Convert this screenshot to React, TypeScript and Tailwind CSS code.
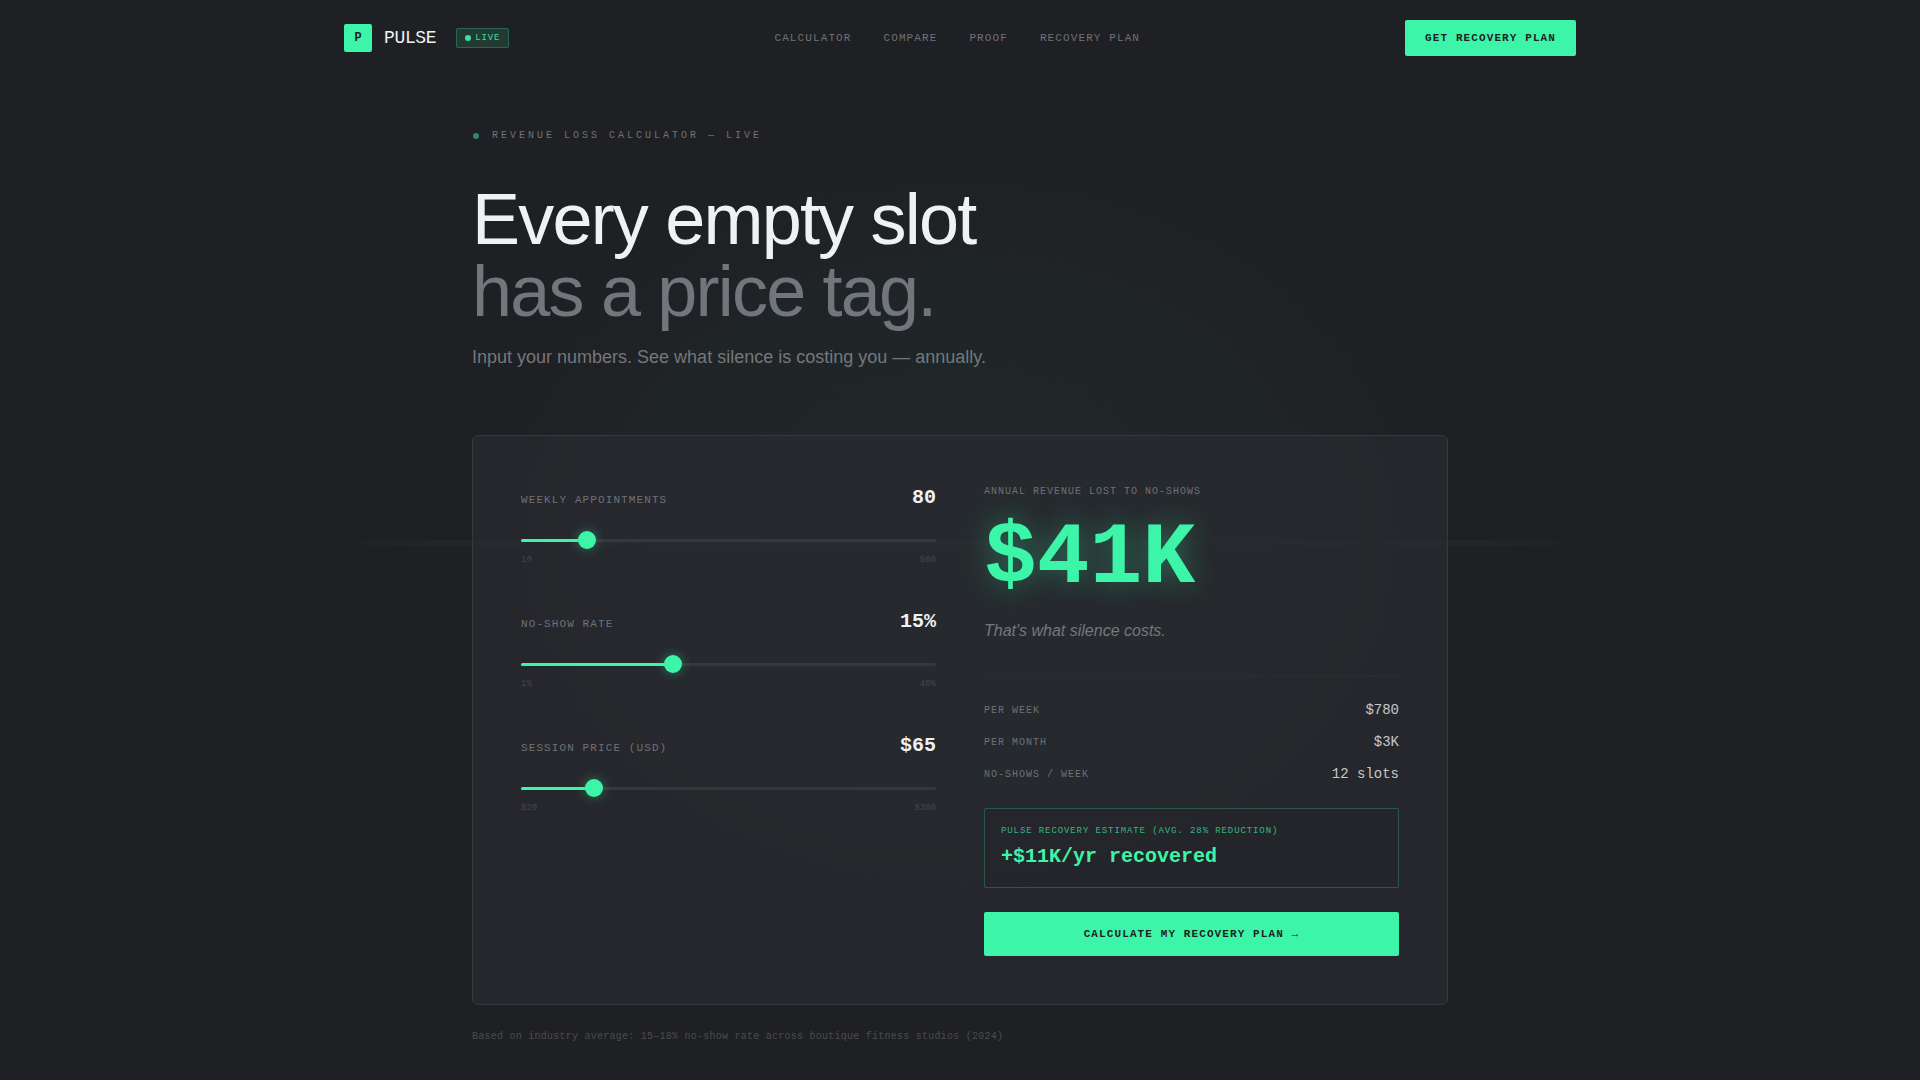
import { useState } from 'react';

const navItems = [
  { label: 'Calculator', id: 'calculator' },
  { label: 'Compare', id: 'compare' },
  { label: 'Proof', id: 'proof' },
  { label: 'Recovery Plan', id: 'recovery-plan' },
];

const RECOVERY_RATE = 0.28;

function formatMoney(value: number) {
  if (value >= 1000) {
    return `$${Math.round(value / 1000)}K`;
  }
  return `$${Math.round(value)}`;
}

function Background() {
  return (
    <div className="absolute inset-0 -z-10 overflow-hidden" aria-hidden="true">
      {/* Grid */}
      <div className="absolute inset-0 bg-[linear-gradient(rgba(255,255,255,0.004)_1px,transparent_1px),linear-gradient(90deg,rgba(255,255,255,0.004)_1px,transparent_1px)] bg-[size:48px_48px]" />
      {/* Glow */}
      <div className="absolute left-1/2 top-1/2 h-[760px] w-[960px] -translate-x-1/2 -translate-y-1/2 bg-[radial-gradient(ellipse_closest-side,rgba(50,220,180,0.05),rgba(50,220,180,0.025)_70%,transparent)]" />
      {/* Scan line */}
      <div className="absolute left-1/6 right-1/6 top-1/2 h-1.5 bg-[linear-gradient(90deg,transparent,rgba(255,255,255,0.025)_10%,rgba(255,255,255,0.025)_90%,transparent)]" />
    </div>
  );
}

function Navigation() {
  return (
    <header>
      <div className="max-w-7xl mx-auto px-6 py-5 flex justify-between items-center">
        <div className="flex items-center gap-3">
          <div className="w-7 h-7 rounded-xs bg-[#3df5a8] text-[#1e1f23] text-xs font-bold flex items-center justify-center">
            P
          </div>
          <span className="text-lg leading-6 tracking-[-0.02em] text-[#f0f1f4]">PULSE</span>
          <div className="ml-2 flex items-center gap-1 px-2 py-[2px] rounded-xs border border-[#3df5a8]/25 bg-[#3df5a8]/12">
            <span className="w-1.5 h-1.5 rounded-full bg-[#3df5a8]/90" />
            <span className="text-[9px] leading-[14px] tracking-widest text-[#3df5a8]/90">LIVE</span>
          </div>
        </div>

        <nav className="flex items-center gap-8">
          {navItems.map((item) => (
            <a
              key={item.id}
              href={`#${item.id}`}
              className="text-[11px] leading-4 tracking-widest uppercase text-[#6f7177] hover:text-white transition-colors"
            >
              {item.label}
            </a>
          ))}
        </nav>

        <button className="px-5 py-[10px] rounded-xs bg-[#3df5a8] text-[11px] leading-4 font-bold tracking-widest uppercase text-[#1e1f23]">
          Get Recovery Plan
        </button>
      </div>
    </header>
  );
}

type SliderProps = {
  id: string;
  label: string;
  value: number;
  min: number;
  max: number;
  format: (value: number) => string;
  onChange: (value: number) => void;
};

function Slider({ id, label, value, min, max, format, onChange }: SliderProps) {
  const percent = ((value - min) / (max - min)) * 100;

  return (
    <div>
      <div className="flex justify-between items-baseline mb-[18px]">
        <label htmlFor={id} className="text-[11px] tracking-widest uppercase text-[#6f7177]">
          {label}
        </label>
        <output htmlFor={id} className="text-xl leading-7 font-bold text-[#f0f1f4]">
          {format(value)}
        </output>
      </div>
      <div className="relative flex items-center h-5">
        <div className="absolute inset-x-0 h-[3px] rounded-full bg-[#35373c]">
          <div className="h-full rounded-full bg-[#3df5a8]" style={{ width: `${percent}%` }} />
        </div>
        <input
          id={id}
          type="range"
          min={min}
          max={max}
          value={value}
          onChange={(e) => onChange(Number(e.target.value))}
          className="relative w-full h-5 appearance-none bg-transparent cursor-pointer [&::-webkit-slider-thumb]:appearance-none [&::-webkit-slider-thumb]:w-[18px] [&::-webkit-slider-thumb]:h-[18px] [&::-webkit-slider-thumb]:rounded-full [&::-webkit-slider-thumb]:bg-[#3df5a8] [&::-webkit-slider-thumb]:shadow-[0_0_12px_rgba(61,245,168,0.4)]"
        />
      </div>
      <div className="flex justify-between mt-[2px] text-[9px] leading-4 text-[#44464b]">
        <span>{format(min)}</span>
        <span>{format(max)}</span>
      </div>
    </div>
  );
}

function Calculator() {
  const [appointments, setAppointments] = useState(80);
  const [noShowRate, setNoShowRate] = useState(15);
  const [price, setPrice] = useState(65);

  const noShows = Math.round((appointments * noShowRate) / 100);
  const weekly = noShows * price;
  const annual = weekly * 52;

  const rows = [
    { label: 'Per week', value: formatMoney(weekly) },
    { label: 'Per month', value: formatMoney(annual / 12) },
    { label: 'No-shows / week', value: `${noShows} slots` },
  ];

  return (
    <div className="grid grid-cols-2 gap-12 p-12 rounded-md border border-[#36383d] bg-[#2a2b31]/70">
      <div className="flex flex-col gap-10">
        <Slider
          id="appointments"
          label="Weekly appointments"
          value={appointments}
          min={10}
          max={500}
          format={(v) => `${v}`}
          onChange={setAppointments}
        />
        <Slider
          id="no-show-rate"
          label="No-show rate"
          value={noShowRate}
          min={1}
          max={40}
          format={(v) => `${v}%`}
          onChange={setNoShowRate}
        />
        <Slider
          id="price"
          label="Session price (USD)"
          value={price}
          min={20}
          max={300}
          format={(v) => `$${v}`}
          onChange={setPrice}
        />
      </div>

      <div>
        <p className="text-[10px] leading-[15px] tracking-widest uppercase text-[#6f7177]">
          Annual revenue lost to no-shows
        </p>
        <p className="mt-4 text-[88px] leading-none font-bold text-[#3df5a8] [text-shadow:0_0_28px_rgba(61,245,168,0.35)]">
          {formatMoney(annual)}
        </p>
        <p className="mt-4 font-['Liberation_Sans',Arial,sans-serif] text-base leading-6 italic text-[#75777d]">
          That's what silence costs.
        </p>

        <div className="mt-8 pt-6 border-t border-[#2b2d32] flex flex-col gap-3">
          {rows.map((row) => (
            <div key={row.label} className="flex justify-between items-center">
              <span className="text-[10px] tracking-widest uppercase text-[#6f7177]">{row.label}</span>
              <span className="text-sm text-[#c6c8cc]">{row.value}</span>
            </div>
          ))}
        </div>

        <div className="mt-6 p-4 rounded-xs border border-[#3df5a8]/25 bg-[#232429]/60">
          <p className="text-[9px] leading-3 tracking-widest uppercase text-[#3df5a8]/70">
            Pulse recovery estimate (avg. 28% reduction)
          </p>
          <p className="mt-[6px] text-xl leading-7 font-bold text-[#3df5a8]">
            +{formatMoney(annual * RECOVERY_RATE)}/yr recovered
          </p>
        </div>

        <button className="mt-6 w-full py-[14px] rounded-xs bg-[#3df5a8] text-[11px] leading-4 font-bold tracking-widest uppercase text-[#1e1f23]">
          Calculate my recovery plan →
        </button>
      </div>
    </div>
  );
}

export default function App() {
  return (
    <div className="relative isolate min-h-screen bg-[#1f2023] font-['Liberation_Mono','Courier_New',monospace]">
      <Background />
      <Navigation />

      <main className="max-w-5xl mx-auto px-6 pt-[52px] pb-8">
        <div className="flex items-center gap-3">
          <span className="w-2 h-2 rounded-full border border-transparent bg-[#3df5a8]/50 bg-clip-padding" />
          <span className="text-[10px] leading-4 tracking-[0.3em] uppercase text-[#6f7177]">
            Revenue loss calculator — live
          </span>
        </div>

        <div className="font-['Liberation_Sans',Arial,sans-serif]">
          <h1 className="mt-[39px] text-7xl leading-none tracking-tight text-[#f0f1f4]">
            Every empty slot
            <span className="block text-[#72757b]">has a price tag.</span>
          </h1>
          <p className="mt-4 mb-16 text-lg leading-7 text-[#75777d]">
            Input your numbers. See what silence is costing you — annually.
          </p>
        </div>

        <Calculator />

        <p className="mt-6 text-[10px] leading-4 tracking-wide text-[#4a4c51]">
          Based on industry average: 15–18% no-show rate across boutique fitness studios (2024)
        </p>
      </main>
    </div>
  );
}
